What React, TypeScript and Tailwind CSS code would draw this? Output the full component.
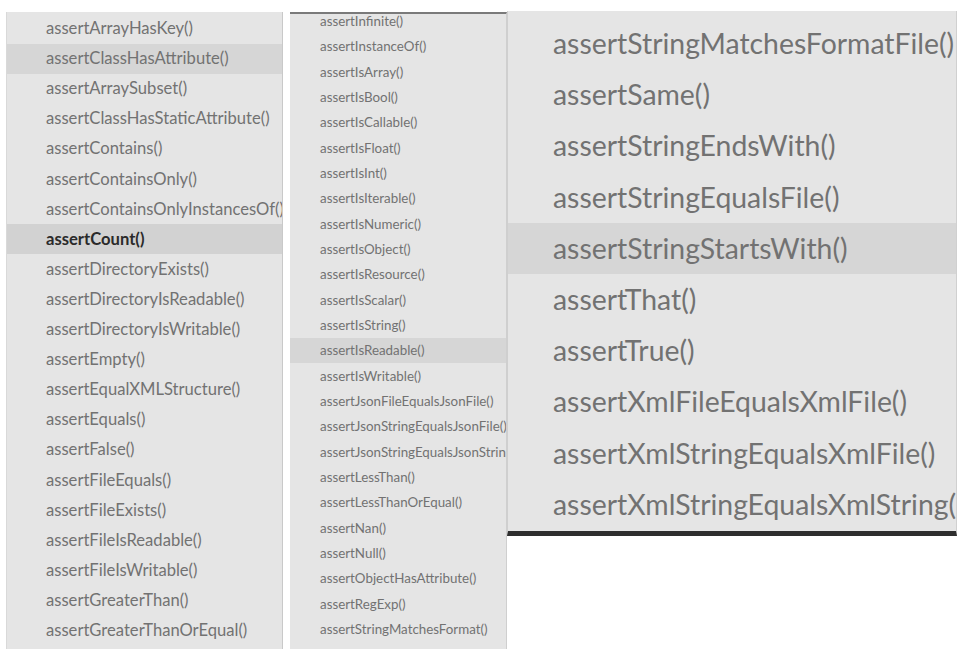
import React from "react";

const list1 = [
  "assertArrayHasKey()",
  "assertClassHasAttribute()",
  "assertArraySubset()",
  "assertClassHasStaticAttribute()",
  "assertContains()",
  "assertContainsOnly()",
  "assertContainsOnlyInstancesOf()",
  "assertCount()",
  "assertDirectoryExists()",
  "assertDirectoryIsReadable()",
  "assertDirectoryIsWritable()",
  "assertEmpty()",
  "assertEqualXMLStructure()",
  "assertEquals()",
  "assertFalse()",
  "assertFileEquals()",
  "assertFileExists()",
  "assertFileIsReadable()",
  "assertFileIsWritable()",
  "assertGreaterThan()",
  "assertGreaterThanOrEqual()",
];

const list2 = [
  "assertInfinite()",
  "assertInstanceOf()",
  "assertIsArray()",
  "assertIsBool()",
  "assertIsCallable()",
  "assertIsFloat()",
  "assertIsInt()",
  "assertIsIterable()",
  "assertIsNumeric()",
  "assertIsObject()",
  "assertIsResource()",
  "assertIsScalar()",
  "assertIsString()",
  "assertIsReadable()",
  "assertIsWritable()",
  "assertJsonFileEqualsJsonFile()",
  "assertJsonStringEqualsJsonFile()",
  "assertJsonStringEqualsJsonString()",
  "assertLessThan()",
  "assertLessThanOrEqual()",
  "assertNan()",
  "assertNull()",
  "assertObjectHasAttribute()",
  "assertRegExp()",
  "assertStringMatchesFormat()",
];

const list3 = [
  "assertStringMatchesFormatFile()",
  "assertSame()",
  "assertStringEndsWith()",
  "assertStringEqualsFile()",
  "assertStringStartsWith()",
  "assertThat()",
  "assertTrue()",
  "assertXmlFileEqualsXmlFile()",
  "assertXmlStringEqualsXmlFile()",
  "assertXmlStringEqualsXmlString()",
];

export default function App() {
  return (
    <div
      className="w-[964px] h-[654px] bg-white overflow-hidden flex items-start pt-[11px] pl-[6px]"
      style={{ fontFamily: "Lato, 'Open Sans', sans-serif" }}
    >
      {/* Panel 1 */}
      <div className="mt-[1px] w-[277px] h-[637px] bg-[#e5e5e5] border-l border-[#d9d9d9] border-r border-r-[#c9c9c9] overflow-hidden pt-[1.5px] shrink-0">
        {list1.map((t, i) => (
          <div
            key={t}
            className={
              "h-[30.1px] flex items-center pl-[39px] text-[16.6px] whitespace-nowrap " +
              (i === 1
                ? "bg-[#d6d6d6] text-[#727272]"
                : i === 7
                ? "bg-[#d2d2d2] text-[#2a2a2a] font-bold"
                : "text-[#727272]")
            }
          >
            {t}
          </div>
        ))}
      </div>

      {/* Panel 2 */}
      <div className="ml-[7px] mt-[1px] w-[217px] h-[637px] bg-[#e5e5e5] border-t-2 border-[#7a7a7a] border-r border-r-[#cfcfcf] overflow-hidden shrink-0">
        <div className="-mt-[5.7px]">
          {list2.map((t, i) => (
            <div
              key={t}
              className={
                "h-[25.33px] flex items-center pl-[30px] text-[13.35px] whitespace-nowrap text-[#727272] " +
                (i === 13 ? "bg-[#d6d6d6]" : "")
              }
            >
              {t}
            </div>
          ))}
        </div>
      </div>

      {/* Panel 3 */}
      <div className="w-[450px] h-[525px] bg-[#e5e5e5] border-l border-[#cfcfcf] border-r border-r-[#d0d0d0] border-b-[5px] border-b-[#2e2e2e] overflow-hidden pt-[6.8px] shrink-0">
        {list3.map((t, i) => (
          <div
            key={t}
            className={
              "h-[51.2px] flex items-center pl-[45px] text-[28.4px] whitespace-nowrap text-[#727272] " +
              (i === 4 ? "bg-[#d6d6d6]" : "")
            }
          >
            {t}
          </div>
        ))}
      </div>
    </div>
  );
}
